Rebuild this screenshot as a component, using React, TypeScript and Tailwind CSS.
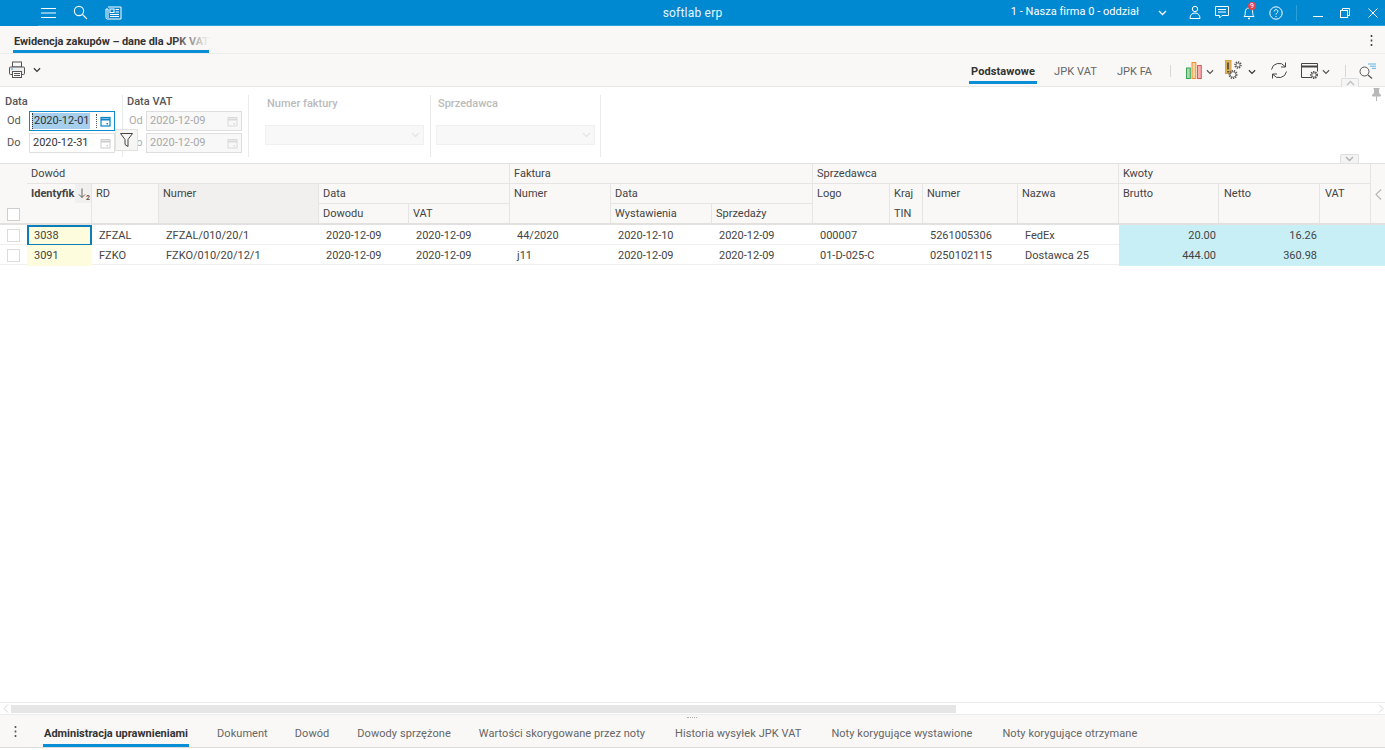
import React from "react";

const GRID =
  "grid grid-cols-[27px_65px_67px_160px_90px_101px_101px_101px_101px_77px_33px_95px_101px_100px_101px_51px_14px]";

const Ico = ({ w = 16, h = 16, vb = "0 0 16 16", c = "#fff", sw = 1, children, className = "" }: any) => (
  <svg width={w} height={h} viewBox={vb} fill="none" stroke={c} strokeWidth={sw} className={"shrink-0 " + className}>
    {children}
  </svg>
);

const Chevron = ({ c = "#444", w = 9, className = "" }: any) => (
  <Ico w={w} h={6} vb="0 0 9 6" c={c} sw={1.3} className={className}>
    <path d="M1 1l3.5 3.5L8 1" />
  </Ico>
);

const Calendar = ({ c = "#cfcfcf", sw = 1 }: any) => (
  <Ico w={11} h={11} vb="0 0 11 11" c={c} sw={sw}>
    <rect x="1" y="1.5" width="9" height="8.5" />
    <path d="M1 3.5h9" strokeWidth="2" />
    <rect x="6.5" y="7" width="1.5" height="1.5" fill={c} stroke="none" />
  </Ico>
);

const Gear = ({ x, y, r }: { x: number; y: number; r: number }) => (
  <g>
    <circle cx={x} cy={y} r={r} strokeDasharray="1.3 1" strokeWidth="1.5" />
    <circle cx={x} cy={y} r={r - 1} strokeWidth="0.8" />
  </g>
);

function DateInput({ value, active, disabled }: { value: string; active?: boolean; disabled?: boolean }) {
  return (
    <div
      className={
        "h-[20px] flex items-center pl-[2px] pr-[3px] border " +
        (active
          ? "w-[86px] border-[#0b8ccf] bg-white text-[#333]"
          : disabled
            ? "w-[96px] border-[#dedede] bg-[#f8f8f8] text-[#a8a8a8]"
            : "w-[86px] border-[#e0e0e0] bg-white text-[#333]")
      }
    >
      <span className={active ? "bg-[#a6cfee] pl-[1px] border-l border-dotted border-[#333]" : "pl-[1px]"}>{value}</span>
      <span className={"ml-auto flex items-center " + (active ? "border-l border-dotted border-[#555] pl-[3px] h-[14px]" : "")}>
        <Calendar c={active ? "#0b84c6" : disabled ? "#dadada" : "#cdcdcd"} sw={active ? 1.2 : 1} />
      </span>
    </div>
  );
}

const HCell = ({ className = "", children }: any) => (
  <div className={"pl-1 pt-[3px] border-b border-r border-[#e6e5e3] text-[#444] leading-[13px] " + className}>{children}</div>
);

const rows = [
  ["3038", "ZFZAL", "ZFZAL/010/20/1", "2020-12-09", "2020-12-09", "44/2020", "2020-12-10", "2020-12-09", "000007", "", "5261005306", "FedEx", "20.00", "16.26", ""],
  ["3091", "FZKO", "FZKO/010/20/12/1", "2020-12-09", "2020-12-09", "j11", "2020-12-09", "2020-12-09", "01-D-025-C", "", "0250102115", "Dostawca 25", "444.00", "360.98", ""],
];

const tabs = [
  { t: "Dokument", cls: "" },
  { t: "Dowód", cls: "ml-[27px]" },
  { t: "Dowody sprzężone", cls: "ml-[28px]" },
  { t: "Wartości skorygowane przez noty", cls: "ml-[28px]" },
  { t: "Historia wysyłek JPK VAT", cls: "ml-[30px]" },
  { t: "Noty korygujące wystawione", cls: "ml-[30px]" },
  { t: "Noty korygujące otrzymane", cls: "ml-[30px]" },
];

export default function App() {
  return (
    <div className="w-[1385px] h-[750px] overflow-hidden bg-white flex flex-col text-[11px] text-[#444] font-['Roboto',sans-serif] relative">
      {/* top bar */}
      <div className="h-[26px] shrink-0 bg-[#0089d1] border-b border-[#2ea2dd] flex items-center text-white relative">
        <div className="absolute left-0 -bottom-px w-[38px] h-px bg-[#0089d1]" />
        <div className="flex-1 flex items-center">
          <Ico w={15} h={12} vb="0 0 15 12" sw={1} className="ml-[41px]">
            <path d="M0 1.5h15M0 6h15M0 10.5h15" />
          </Ico>
          <Ico w={15} h={15} vb="0 0 15 15" sw={1.1} className="ml-[17px]">
            <circle cx="6" cy="6" r="4.6" />
            <path d="M9.5 9.5L14 14" />
          </Ico>
          <Ico w={17} h={14} vb="0 0 17 14" sw={1} className="ml-[17px]">
            <path d="M3 1h13v12H2.5A1.5 1.5 0 011 11.5V3h2v9" />
            <rect x="5" y="3" width="4" height="3.5" />
            <path d="M10.5 3.5H14M10.5 6H14M5 8.5h9M5 10.5h9" />
          </Ico>
        </div>
        <div className="text-[12px] tracking-[0.2px] text-[#e8f5fc]">softlab erp</div>
        <div className="flex-1 flex items-center justify-end">
          <span className="text-[11px] tracking-[0.03px]">1 - Nasza firma 0 - oddział</span>
          <Chevron c="#fff" w={9} className="ml-[19px]" />
          <Ico w={12} h={15} vb="0 0 12 15" className="ml-[22px]">
            <circle cx="6" cy="4" r="2.7" />
            <path d="M1 13.5c0-3.5 2-5.5 5-5.5s5 2 5 5.5z" />
          </Ico>
          <Ico w={14} h={13} vb="0 0 14 13" className="ml-[14px]">
            <path d="M.5.5h13v9H7l-2.5 2.5V9.5H.5z" />
            <path d="M3 3.5h8M3 6h8" />
          </Ico>
          <div className="ml-[14px] relative">
            <Ico w={12} h={15} vb="0 0 12 15">
              <path d="M1 11.5c1-1 1.3-2 1.3-4.500 0-2.500 1.500-4 3.700-4s3.700 1.500 3.700 4c0 2.500.3 3.500 1.300 4.500z" />
              <path d="M5 13.500h2" strokeWidth="1.500" />
            </Ico>
            <span className="absolute -top-[3px] left-[5px] w-[8px] h-[8px] rounded-full bg-[#e0454e] text-[7px] leading-[8px] text-center text-white">9</span>
          </div>
          <Ico w={14} h={14} vb="0 0 14 14" className="ml-[14px]">
            <circle cx="7" cy="7" r="6.200" />
            <path d="M5.200 5.400c0-2.300 3.700-2.300 3.700 0 0 1.500-1.900 1.500-1.900 3.200" />
            <path d="M7 10v1" />
          </Ico>
          <div className="w-px h-[16px] bg-[#2ba0dc] ml-[13px]" />
          <Ico w={10} h={10} vb="0 0 10 10" className="ml-[16px]">
            <path d="M0 8.500h10" />
          </Ico>
          <Ico w={10} h={10} vb="0 0 10 10" className="ml-[17px]">
            <rect x=".5" y="2.500" width="7" height="7" />
            <path d="M2.500 2.500V.5h7v7H7.500" />
          </Ico>
          <Ico w={10} h={10} vb="0 0 10 10" className="ml-[18px] mr-[7px]">
            <path d="M.5.5l9 9M9.500.5l-9 9" />
          </Ico>
        </div>
      </div>

      {/* document tab row */}
      <div className="h-[28px] shrink-0 bg-[#f9f8f7] border-b border-[#eeedeb] flex items-start pl-[13px] pr-[12px] relative">
        <div className="h-[27px] border-b-[3px] border-[#0a8fd6] relative pl-px pt-[9px] whitespace-nowrap font-bold text-[#333] leading-[13px] tracking-[-0.05px]">
          Ewidencja zakupów – dane dla JPK VAT
          <div className="absolute right-0 top-0 bottom-0 w-[36px] bg-gradient-to-r from-transparent to-[#f9f8f7]" />
        </div>
        <Ico w={3} h={11} vb="0 0 3 11" c="#444" className="ml-auto mt-[9px]">
          <path d="M1.500 0v2M1.500 4.500v2M1.500 9v2" strokeWidth="1.600" />
        </Ico>
      </div>

      {/* toolbar */}
      <div className="h-[33px] shrink-0 bg-[#f9f8f7] border-b border-[#e9e8e6] flex items-start relative">
        <div className="flex items-center pl-[9px] pt-[7px]">
          <Ico w={16} h={18} vb="0 0 16 18" c="#555" sw={1}>
            <rect x="3.500" y="1" width="9" height="5" />
            <rect x=".5" y="6" width="15" height="7.500" rx="1" fill="#eee" />
            <rect x="3.500" y="10.500" width="9" height="6" fill="#fff" />
            <path d="M2 8h2" stroke="#2b9bd6" />
            <path d="M5 12.500h6M5 14.500h6" />
          </Ico>
          <Chevron c="#333" w={8} className="ml-[8px]" />
        </div>
        <div className="ml-auto flex items-start pr-[9px]">
          <div className="h-[30px] border-b-[3px] border-[#0a8fd6] px-[2px] pt-[11px] font-bold text-[#333] leading-[13px] tracking-[0.1px]">Podstawowe</div>
          <div className="pt-[11px] ml-[17px] leading-[13px] text-[#666] tracking-[0.1px]">JPK VAT</div>
          <div className="pt-[11px] ml-[20px] leading-[13px] text-[#666]">JPK FA</div>
          <div className="w-px h-[12px] bg-[#d8d8d8] ml-[18px] mt-[11px]" />
          <Ico w={16} h={17} vb="0 0 16 17" c="#555" className="ml-[15px] mt-[8px]">
            <rect x=".5" y="6" width="3.800" height="10.500" fill="#a9d8a9" stroke="#3aa655" />
            <rect x="6" y=".5" width="3.800" height="16" fill="#f7d3a0" stroke="#ef8f2f" />
            <rect x="11.500" y="3.500" width="3.800" height="13" fill="#f5b0b0" stroke="#e0585c" />
          </Ico>
          <Chevron c="#555" w={8} className="ml-[4px] mt-[15px]" />
          <Ico w={17} h={20} vb="0 0 17 20" c="#555" className="ml-[11px] mt-[6px]">
            <rect x=".5" y=".5" width="5.500" height="13" fill="#e0b25e" stroke="#d9a548" />
            <path d="M3 2.500v7M3 11v1.500" stroke="#333" strokeWidth="1.400" />
            <Gear x={13} y={5} r={3} />
            <Gear x={8} y={14.500} r={3.800} />
          </Ico>
          <Chevron c="#333" w={8} className="ml-[6px] mt-[15px]" />
          <Ico w={18} h={17} vb="0 0 18 17" c="#444" className="ml-[14px] mt-[8px]">
            <path d="M1.500 7.500A7.500 7.500 0 0115 4.500" />
            <path d="M15.500.5v4.500H11" />
            <path d="M16.500 9.500A7.500 7.500 0 013 12.500" />
            <path d="M2.500 16.500V12H7" />
          </Ico>
          <Ico w={18} h={16} vb="0 0 18 16" c="#444" className="ml-[13px] mt-[9px]">
            <path d="M10 14.500H.5V.5h16v8" />
            <path d="M.5 3.500h16" strokeWidth="2" />
            <Gear x={13} y={12} r={3.200} />
          </Ico>
          <Chevron c="#555" w={8} className="ml-[3px] mt-[15px]" />
          <div className="w-px h-[12px] bg-[#d8d8d8] ml-[15px] mt-[11px]" />
          <Ico w={17} h={16} vb="0 0 17 16" c="#555" className="ml-[13px] mt-[9px]">
            <circle cx="5.500" cy="8.500" r="4.500" />
            <path d="M9 12l4 3.500" strokeWidth="1.300" />
            <path d="M9 1h8M11 3.200h6M13 5.400h4" stroke="#5cb4e6" />
          </Ico>
        </div>
        <div className="absolute left-[1341px] top-[24px] w-[18px] h-[9px] border border-b-0 border-[#dedede] bg-[#f5f5f5] rounded-t-[2px] flex items-center justify-center">
          <Chevron c="#c0c0c0" w={9} className="rotate-180" />
        </div>
      </div>

      {/* filter panel */}
      <div className="h-[76px] shrink-0 flex bg-white pt-[8px] relative">
        <div className="w-[123px] h-[62px] border-r border-[#ebebeb] pl-[5px] relative">
          <div className="font-medium text-[#555] leading-[13px]">Data</div>
          <div className="flex items-center mt-[3px]">
            <span className="w-[24px] pl-[2px] text-[#555]">Od</span>
            <DateInput value="2020-12-01" active />
          </div>
          <div className="flex items-center mt-[2px]">
            <span className="w-[24px] pl-[2px] text-[#555]">Do</span>
            <DateInput value="2020-12-31" />
          </div>
        </div>
        <div className="w-[126px] h-[62px] border-r border-[#ebebeb] pl-[4px]">
          <div className="font-medium text-[#555] leading-[13px]">Data VAT</div>
          <div className="flex items-center mt-[3px]">
            <span className="w-[19px] pl-[2px] text-[#aaa]">Od</span>
            <DateInput value="2020-12-09" disabled />
          </div>
          <div className="flex items-center mt-[2px]">
            <span className="w-[19px] pl-[2px] text-[#aaa]">Do</span>
            <DateInput value="2020-12-09" disabled />
          </div>
        </div>
        <div className="absolute left-[115px] top-[42px] w-[23px] h-[22px] bg-[#f6f6f5] border border-[#e2e2e2] flex items-center justify-center">
          <Ico w={13} h={14} vb="0 0 13 14" c="#444">
            <path d="M.5.5h12L8 6.500V13.500L5 11.500V6.500z" />
          </Ico>
        </div>
        <div className="w-[182px] h-[62px] border-r border-[#ebebeb] pl-[16px] pr-[6px]">
          <div className="font-medium text-[#bbb] leading-[13px] mt-[2px] pl-[2px]">Numer faktury</div>
          <div className="h-[20px] mt-[15px] border border-[#f0f0f0] bg-[#f8f8f8] flex items-center justify-end pr-[3px]">
            <Chevron c="#e6e6e6" w={9} />
          </div>
        </div>
        <div className="w-[170px] h-[62px] border-r border-[#ebebeb] pl-[5px] pr-[5px]">
          <div className="font-medium text-[#bbb] leading-[13px] mt-[2px] pl-[2px]">Sprzedawca</div>
          <div className="h-[20px] mt-[15px] border border-[#f0f0f0] bg-[#f8f8f8] flex items-center justify-end pr-[3px]">
            <Chevron c="#e6e6e6" w={9} />
          </div>
        </div>
        <Ico w={9} h={13} vb="0 0 9 13" c="#b8b8b8" className="absolute left-[1372px] top-[1px]">
          <path d="M2 0h5v1L6.500 2v3L8.500 7v1H.5V7l2-2V2L2 1z" fill="#b8b8b8" />
          <path d="M4.500 8v5" />
        </Ico>
        <div className="absolute left-[1340px] bottom-0 w-[19px] h-[9px] border border-b-0 border-[#dedede] bg-[#f3f3f3] rounded-t-[2px] flex items-center justify-center">
          <Chevron c="#b0b0b0" w={9} />
        </div>
      </div>

      {/* grid header */}
      <div className={GRID + " grid-rows-[20px_20px_19px] shrink-0 bg-[#f9f8f7] border-t-2 border-b-2 border-[#e2e1df] -mt-px"}>
        <div className="row-span-3 flex items-end pl-[7px] pb-[2px]">
          <div className="w-[13px] h-[13px] bg-white border border-[#cfcfcf]" />
        </div>
        <HCell className="col-span-5">Dowód</HCell>
        <HCell className="col-span-3">Faktura</HCell>
        <HCell className="col-span-4">Sprzedawca</HCell>
        <HCell className="col-span-3">Kwoty</HCell>
        <div className="row-span-3 flex items-start justify-center pt-[25px]">
          <Ico w={7} h={11} vb="0 0 7 11" c="#b5b5b5" sw={1.1}>
            <path d="M6 .5L1 5.500 6 10.500" />
          </Ico>
        </div>
        <HCell className="row-span-2 font-bold text-[#333] !pt-0 !pr-0 flex items-start justify-between border-b-0">
          <span className="pt-[3px]">Identyfik</span>
          <span className="w-[16px] h-[19px] bg-[#f1f0ee] flex items-center justify-center pl-[2px]">
            <Ico w={12} h={13} vb="0 0 12 13" c="#555" sw={0.9}>
              <path d="M4 1.500v9M1 7.500l3 3 3-3" />
              <text x="8" y="12.500" fontSize="7" fill="#555" stroke="none" fontFamily="Roboto">2</text>
            </Ico>
          </span>
        </HCell>
        <HCell className="row-span-2 border-b-0">RD</HCell>
        <HCell className="row-span-2 border-b-0 bg-[#f1f0ee]">Numer</HCell>
        <HCell className="col-span-2">Data</HCell>
        <HCell className="row-span-2 border-b-0">Numer</HCell>
        <HCell className="col-span-2">Data</HCell>
        <HCell className="row-span-2 border-b-0">Logo</HCell>
        <HCell className="border-b-0">Kraj</HCell>
        <HCell className="row-span-2 border-b-0">Numer</HCell>
        <HCell className="row-span-2 border-b-0">Nazwa</HCell>
        <HCell className="row-span-2 border-b-0">Brutto</HCell>
        <HCell className="row-span-2 border-b-0 !pl-[5px]">Netto</HCell>
        <HCell className="row-span-2 border-b-0 !pl-[5px]">VAT</HCell>
        <HCell className="border-b-0">Dowodu</HCell>
        <HCell className="border-b-0">VAT</HCell>
        <HCell className="border-b-0">Wystawienia</HCell>
        <HCell className="border-b-0">Sprzedaży</HCell>
        <HCell className="border-b-0">TIN</HCell>
      </div>

      {/* rows */}
      <div className="flex-1 min-h-0">
        {rows.map((r, i) => (
          <div key={i} className={GRID + " h-[20px] border-b border-[#efefef] leading-[21px] text-[#444]"}>
            <div className="flex items-center pl-[7px]">
              <div className="w-[13px] h-[13px] bg-white border border-[#dcdcdc]" />
            </div>
            <div className={"bg-[#fdfdde] pl-[7px] " + (i === 0 ? "border-2 border-[#0b7db8] !pl-[5px] leading-[17px]" : "")}>{r[0]}</div>
            <div className="pl-[7px]">{r[1]}</div>
            <div className="pl-[7px]">{r[2]}</div>
            <div className="pl-[7px]">{r[3]}</div>
            <div className="pl-[7px]">{r[4]}</div>
            <div className="pl-[7px]">{r[5]}</div>
            <div className="pl-[7px]">{r[6]}</div>
            <div className="pl-[7px]">{r[7]}</div>
            <div className="pl-[7px]">{r[8]}</div>
            <div>{r[9]}</div>
            <div className="pl-[7px]">{r[10]}</div>
            <div className="pl-[7px]">{r[11]}</div>
            <div className="bg-[#c9eff6] text-right pr-[3px]">{r[12]}</div>
            <div className="bg-[#c9eff6] text-right pr-[3px]">{r[13]}</div>
            <div className="bg-[#c9eff6]" />
            <div className="bg-[#c9eff6]" />
          </div>
        ))}
      </div>

      {/* horizontal scrollbar */}
      <div className="h-[13px] shrink-0 border-t border-b border-[#ececec] flex items-center bg-white">
        <Ico w={6} h={9} vb="0 0 6 9" c="#d5d5d5" className="ml-[3px]">
          <path d="M5 .5l-4 4 4 4" />
        </Ico>
        <div className="w-[945px] h-[8px] bg-[#e6e6e6] ml-[2px]" />
        <Ico w={6} h={9} vb="0 0 6 9" c="#d5d5d5" className="ml-auto mr-[1px]">
          <path d="M1 .5l4 4-4 4" />
        </Ico>
      </div>

      {/* bottom tabs */}
      <div className="h-[33px] shrink-0 bg-[#f9f8f7] border-b border-[#dddcda] flex items-start relative mb-[2px]">
        <Ico w={3} h={11} vb="0 0 3 11" c="#555" className="ml-[14px] mt-[11px]">
          <path d="M1.500 0v2M1.500 4.500v2M1.500 9v2" strokeWidth="1.600" />
        </Ico>
        <div className="ml-[26px] h-[32px] border-b-[3px] border-[#0a8fd6] px-[1px] pt-[12px] leading-[13px] font-bold text-[#333] whitespace-nowrap">
          Administracja uprawnieniami
        </div>
        <div className="flex ml-[28px] pt-[12px] leading-[13px] text-[#666] whitespace-nowrap tracking-[0.06px]">
          {tabs.map((x) => (
            <span key={x.t} className={x.cls}>{x.t}</span>
          ))}
        </div>
        <div className="absolute left-[687px] top-[2px] w-[10px] border-t border-dotted border-[#aaa]" />
      </div>
    </div>
  );
}
